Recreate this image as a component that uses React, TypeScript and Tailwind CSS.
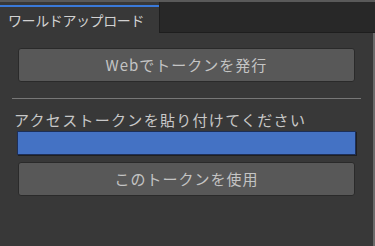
const font = {
  fontFamily: '"Noto Sans CJK JP", "Noto Sans", sans-serif',
};

function PanelButton({ label }: { label: string }) {
  return (
    <button
      type="button"
      className="mx-[18px] flex h-[34px] items-center justify-center rounded-[3px] border border-[#2a2a2a] bg-[#585858] text-[15px] tracking-[1px] text-[#c4c4c4]"
    >
      {label}
    </button>
  );
}

export default function App() {
  return (
    <div
      className="flex h-[246px] w-[375px] flex-col overflow-hidden bg-[#383838]"
      style={font}
    >
      {/* tab strip */}
      <div className="flex h-[33px] border-t-2 border-[#5a5a5a]">
        <div className="flex w-[159px] flex-col bg-[#383838]">
          <div className="mt-[3px] h-[2px] bg-[#3a79d8]" />
          <div className="flex flex-1 items-center pl-[8px] text-[14px] leading-none tracking-[-0.4px] text-[#d2d2d2]">
            ワールドアップロード
          </div>
        </div>
        <div className="flex-1 border-b border-l border-[#1e1e1e] bg-[#282828]" />
      </div>

      {/* panel body */}
      <div className="flex flex-1 border-r-2 border-[#6a6a6a]">
        <div className="flex flex-1 flex-col pt-[15px]">
          <PanelButton label="Webでトークンを発行" />
          <div className="mx-[12px] mt-[16px] h-px bg-[#777777]" />
          <div className="mt-[11px] pl-[14px] text-[15px] leading-[20px] tracking-[1.3px] text-[#c8c8c8]">
            アクセストークンを貼り付けてください
          </div>
          <div className="mx-[17px] mt-[1px] h-[24px] border border-[#1d2f58] bg-[#4472c4] shadow-[1px_1px_0_#202020]" />
          <div className="mt-[7px] flex flex-col">
            <PanelButton label="このトークンを使用" />
          </div>
        </div>
      </div>
    </div>
  );
}
